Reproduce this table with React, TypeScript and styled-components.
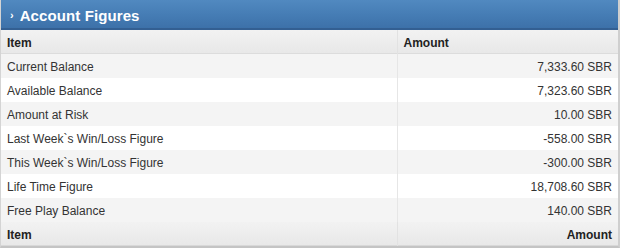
import styled, { createGlobalStyle } from 'styled-components';

const GlobalStyle = createGlobalStyle`
  html, body {
    margin: 0;
    padding: 0;
    background: #ffffff;
  }
  body {
    font-family: "Liberation Sans", Arial, sans-serif;
  }
`;

const Panel = styled.div`
  width: 620px;
  height: 248px;
  box-sizing: border-box;
  display: flex;
  flex-direction: column;
  border-left: 1px solid #d4d4d4;
  border-right: 2px solid #cfcfcf;
  border-bottom: 2px solid #c4c4c4;
`;

const TitleBar = styled.div`
  height: 30px;
  box-sizing: border-box;
  display: flex;
  align-items: center;
  gap: 6px;
  padding: 3px 0 0 9px;
  background: linear-gradient(to bottom, #5189c0 0%, #457cb4 55%, #3d71a9 100%);
  border-bottom: 2px solid #335f92;
  color: #ffffff;
`;

const Chevron = styled.span`
  font-size: 11px;
  font-weight: bold;
  line-height: 1;
  margin-top: 1px;
`;

const Title = styled.h2`
  margin: 0;
  font-size: 15px;
  font-weight: bold;
  letter-spacing: 0.1px;
`;

const Table = styled.table`
  width: 100%;
  border-collapse: collapse;
  table-layout: fixed;
  font-size: 12px;
  color: #333333;
`;

const HeadRow = styled.tr<{ $footer?: boolean }>`
  height: 24px;
  background: linear-gradient(to bottom, #f2f2f2 0%, #e8e8e8 100%);
  border-bottom: 1px solid ${({ $footer }) => ($footer ? '#d8d8d8' : '#dcdcdc')};
`;

const HeadCell = styled.th<{ $right?: boolean }>`
  font-weight: bold;
  color: #222222;
  text-align: ${({ $right }) => ($right ? 'right' : 'left')};
  padding: 3px 6px 0;
  border-right: 1px solid #e2e2e2;
  &:last-child {
    border-right: none;
  }
`;

const Row = styled.tr<{ $shaded: boolean }>`
  height: 24px;
  background: ${({ $shaded }) => ($shaded ? '#f4f4f4' : '#ffffff')};
`;

const Cell = styled.td<{ $right?: boolean }>`
  padding: 3px 6px 0;
  text-align: ${({ $right }) => ($right ? 'right' : 'left')};
  border-right: 1px solid #e6e6e6;
  &:last-child {
    border-right: none;
  }
`;

const figures = [
  { item: 'Current Balance', amount: '7,333.60 SBR' },
  { item: 'Available Balance', amount: '7,323.60 SBR' },
  { item: 'Amount at Risk', amount: '10.00 SBR' },
  { item: 'Last Week`s Win/Loss Figure', amount: '-558.00 SBR' },
  { item: 'This Week`s Win/Loss Figure', amount: '-300.00 SBR' },
  { item: 'Life Time Figure', amount: '18,708.60 SBR' },
  { item: 'Free Play Balance', amount: '140.00 SBR' },
];

export default function App() {
  return (
    <>
      <GlobalStyle />
      <Panel>
        <TitleBar>
          <Chevron>›</Chevron>
          <Title>Account Figures</Title>
        </TitleBar>
        <Table>
          <colgroup>
            <col style={{ width: 396 }} />
            <col />
          </colgroup>
          <thead>
            <HeadRow>
              <HeadCell>Item</HeadCell>
              <HeadCell>Amount</HeadCell>
            </HeadRow>
          </thead>
          <tbody>
            {figures.map((f, i) => (
              <Row key={f.item} $shaded={i % 2 === 0}>
                <Cell>{f.item}</Cell>
                <Cell $right>{f.amount}</Cell>
              </Row>
            ))}
          </tbody>
          <tfoot>
            <HeadRow $footer>
              <HeadCell>Item</HeadCell>
              <HeadCell $right>Amount</HeadCell>
            </HeadRow>
          </tfoot>
        </Table>
      </Panel>
    </>
  );
}
